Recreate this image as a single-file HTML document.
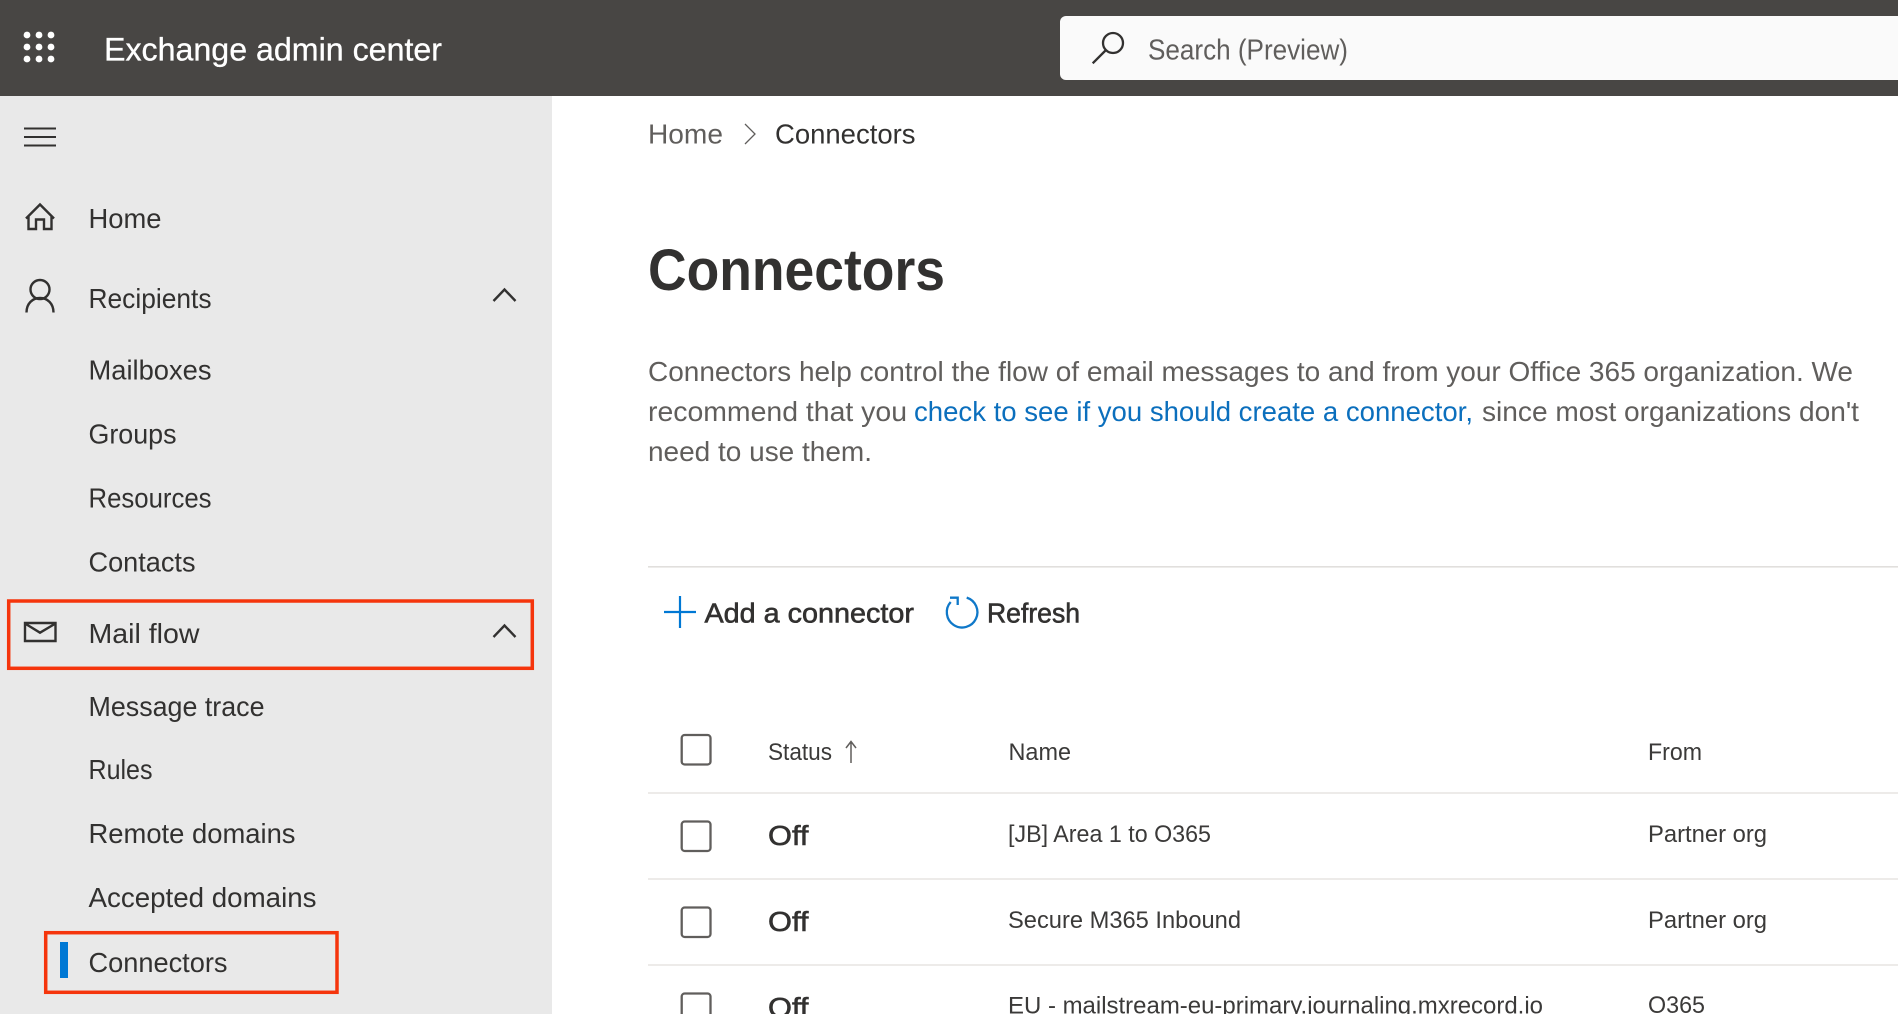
<!DOCTYPE html>
<html lang="en"><head><meta charset="utf-8"><title>Exchange admin center</title>
<style>
html,body{margin:0;padding:0;background:#fff;width:1898px;height:1014px;overflow:hidden}
svg{display:block}
text{font-family:"Liberation Sans",sans-serif;font-size:28px;fill:#323130;white-space:pre}
.g{fill:#605e5c}
.s{font-size:24px;fill:#3b3a39}
.b{stroke:#323130;stroke-width:.6px}
.i{fill:none;stroke:#323130;stroke-width:2.4}
</style></head><body>
<svg xmlns="http://www.w3.org/2000/svg" width="1898" height="1014" viewBox="0 0 1898 1014">
<rect width="1898" height="1014" fill="#fff"/>
<rect width="1898" height="96" fill="#484644"/>
<rect y="96" width="552" height="918" fill="#e9e9e9"/>

<g fill="#fff">
<circle cx="27" cy="35" r="3.4"/><circle cx="39" cy="35" r="3.4"/><circle cx="51" cy="35" r="3.4"/>
<circle cx="27" cy="47" r="3.4"/><circle cx="39" cy="47" r="3.4"/><circle cx="51" cy="47" r="3.4"/>
<circle cx="27" cy="59" r="3.4"/><circle cx="39" cy="59" r="3.4"/><circle cx="51" cy="59" r="3.4"/>
</g>
<text x="104" y="60.5" style="font-size:32px;fill:#fff;stroke:#fff;stroke-width:.3px" textLength="338" lengthAdjust="spacingAndGlyphs">Exchange admin center</text>

<path d="M1066 16H1898V80H1066a6 6 0 0 1-6-6V22a6 6 0 0 1 6-6z" fill="#fafafa"/>
<circle cx="1113" cy="43" r="10" fill="none" stroke="#323130" stroke-width="2.3"/>
<path d="M1105.5 50.5L1092.7 63.3" fill="none" stroke="#323130" stroke-width="2.3"/>
<text x="1148" y="59.5" class="g" style="font-size:29px" textLength="200" lengthAdjust="spacingAndGlyphs">Search (Preview)</text>

<path d="M24 128.5H56M24 137H56M24 145.5H56" class="i" style="stroke-width:2"/>

<path d="M26 218.5L40 204.5L54 218.5M28.5 216V229H36V219.5H44V229H51.5V216" class="i"/>
<text x="88.5" y="228" textLength="73" lengthAdjust="spacingAndGlyphs">Home</text>

<circle cx="40" cy="289.5" r="9.5" class="i"/>
<path d="M26.5 312.5c0-9 6-14.5 13.5-14.5s13.5 5.500 13.500 14.500" class="i"/>
<text x="88.5" y="308" textLength="123" lengthAdjust="spacingAndGlyphs">Recipients</text>
<path d="M493.500 301L504.500 289.500L515.500 301" class="i"/>

<text x="88.5" y="379.5" textLength="123" lengthAdjust="spacingAndGlyphs">Mailboxes</text>
<text x="88.5" y="443.5" textLength="88" lengthAdjust="spacingAndGlyphs">Groups</text>
<text x="88.5" y="507.7" textLength="123" lengthAdjust="spacingAndGlyphs">Resources</text>
<text x="88.5" y="571.7" textLength="107" lengthAdjust="spacingAndGlyphs">Contacts</text>

<path d="M25 623H55.500V641H25zM25 623.500L40 632.700L55.500 623.500" class="i"/>
<text x="88.5" y="643" textLength="111" lengthAdjust="spacingAndGlyphs">Mail flow</text>
<path d="M493.500 637L504.500 625.500L515.500 637" class="i"/>

<text x="88.5" y="716" textLength="176" lengthAdjust="spacingAndGlyphs">Message trace</text>
<text x="88.5" y="779" textLength="64" lengthAdjust="spacingAndGlyphs">Rules</text>
<text x="88.5" y="843" textLength="207" lengthAdjust="spacingAndGlyphs">Remote domains</text>
<text x="88.5" y="907" textLength="228" lengthAdjust="spacingAndGlyphs">Accepted domains</text>
<rect x="60" y="942" width="8" height="36" fill="#0078d4"/>
<text x="88.5" y="972" textLength="139" lengthAdjust="spacingAndGlyphs">Connectors</text>

<rect x="8.700" y="601" width="523.600" height="67.300" fill="none" stroke="#f5350c" stroke-width="3.500"/>
<rect x="45.700" y="932.700" width="291.300" height="59.600" fill="none" stroke="#f5350c" stroke-width="3.500"/>

<text x="648" y="143.500" class="g" textLength="75" lengthAdjust="spacingAndGlyphs">Home</text>
<path d="M745 124L755 134L745 144" fill="none" stroke="#605e5c" stroke-width="1.300"/>
<text x="775" y="143.500" textLength="140.500" lengthAdjust="spacingAndGlyphs">Connectors</text>

<text x="648" y="290" style="font-size:58px;font-weight:700" textLength="297" lengthAdjust="spacingAndGlyphs">Connectors</text>

<text x="648" y="381" class="g" textLength="1205" lengthAdjust="spacingAndGlyphs">Connectors help control the flow of email messages to and from your Office 365 organization. We</text>
<text x="648" y="421" class="g" textLength="259" lengthAdjust="spacingAndGlyphs">recommend that you</text>
<text x="914" y="421" style="fill:#0b6fbd" textLength="559" lengthAdjust="spacingAndGlyphs">check to see if you should create a connector,</text>
<text x="1482" y="421" class="g" textLength="377" lengthAdjust="spacingAndGlyphs">since most organizations don't</text>
<text x="648" y="461" class="g" textLength="224" lengthAdjust="spacingAndGlyphs">need to use them.</text>

<rect x="648" y="566" width="1250" height="1.600" fill="#e1dfdd"/>

<path d="M680 596V628M664 612H696" fill="none" stroke="#0078d4" stroke-width="2.200"/>
<text x="704.500" y="622.700" class="b" textLength="209.500" lengthAdjust="spacingAndGlyphs">Add a connector</text>
<path d="M966.700 597.600A15.300 15.300 0 1 1 950.700 602" fill="none" stroke="#0f78c9" stroke-width="2.300"/>
<path d="M950 597.700H957.700V605" fill="none" stroke="#0f78c9" stroke-width="2.300"/>
<text x="987" y="622.700" class="b" textLength="93" lengthAdjust="spacingAndGlyphs">Refresh</text>

<g fill="none" stroke="#605e5c" stroke-width="2.300">
<rect x="681.700" y="735" width="28.800" height="29.500" rx="3"/>
<rect x="681.700" y="821.500" width="28.800" height="29.500" rx="3"/>
<rect x="681.700" y="907.500" width="28.800" height="29.500" rx="3"/>
<rect x="681.700" y="993.500" width="28.800" height="29.500" rx="3"/>
</g>

<text x="768" y="760" class="s" textLength="64" lengthAdjust="spacingAndGlyphs">Status</text>
<path d="M851 763V741.500M846 748L851 741.500L856 748" fill="none" stroke="#605e5c" stroke-width="1.500"/>
<text x="1008.500" y="760" class="s" textLength="62.500" lengthAdjust="spacingAndGlyphs">Name</text>
<text x="1648" y="760" class="s" textLength="54" lengthAdjust="spacingAndGlyphs">From</text>

<rect x="648" y="792" width="1250" height="2" fill="#edebe9"/>
<rect x="648" y="878" width="1250" height="2" fill="#edebe9"/>
<rect x="648" y="964" width="1250" height="2" fill="#edebe9"/>

<text x="768" y="845" class="b" textLength="40.500" lengthAdjust="spacingAndGlyphs">Off</text>
<text x="1008" y="842" class="s" textLength="203" lengthAdjust="spacingAndGlyphs">[JB] Area 1 to O365</text>
<text x="1648" y="842" class="s" textLength="119" lengthAdjust="spacingAndGlyphs">Partner org</text>

<text x="768" y="931" class="b" textLength="40.500" lengthAdjust="spacingAndGlyphs">Off</text>
<text x="1008" y="928" class="s" textLength="233" lengthAdjust="spacingAndGlyphs">Secure M365 Inbound</text>
<text x="1648" y="928" class="s" textLength="119" lengthAdjust="spacingAndGlyphs">Partner org</text>

<text x="768" y="1017" class="b" textLength="40.500" lengthAdjust="spacingAndGlyphs">Off</text>
<text x="1008" y="1013.500" class="s" textLength="535" lengthAdjust="spacingAndGlyphs">EU - mailstream-eu-primary.journaling.mxrecord.io</text>
<text x="1648" y="1013" class="s" textLength="57" lengthAdjust="spacingAndGlyphs">O365</text>
</svg>
</body></html>
